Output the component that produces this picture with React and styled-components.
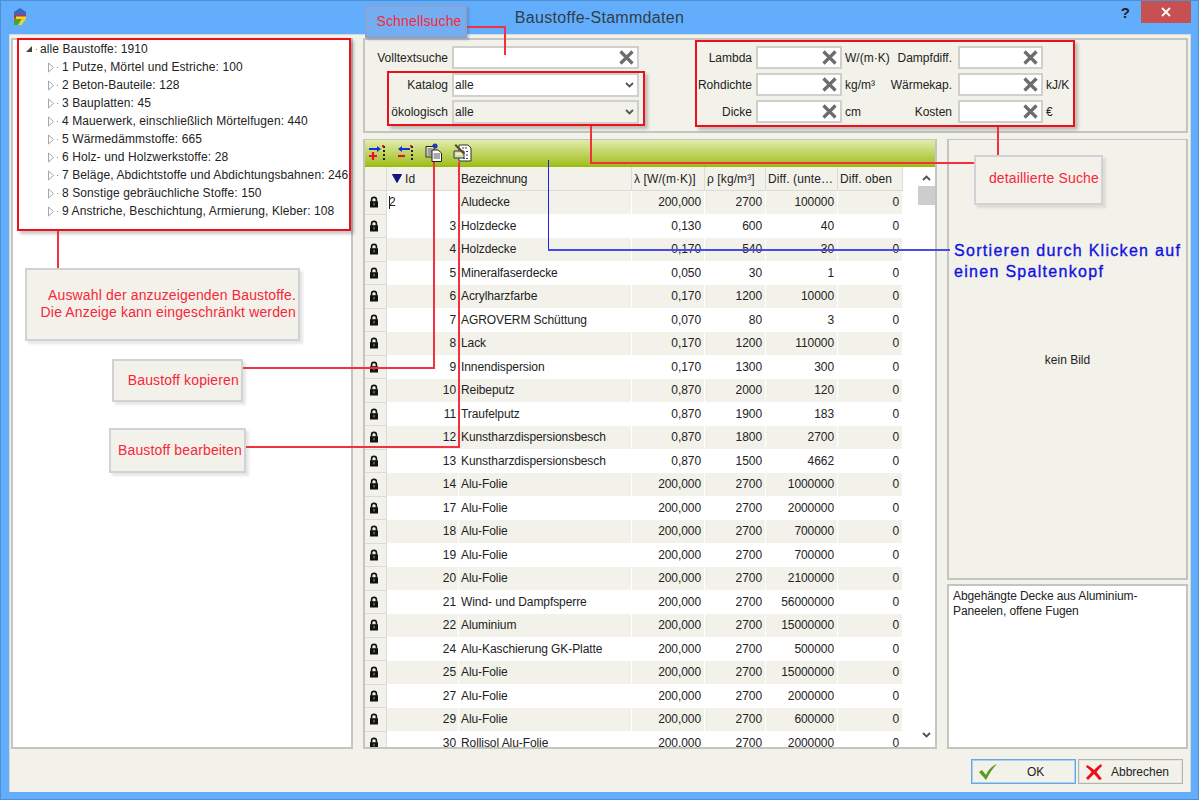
import React from 'react';
import styled, { createGlobalStyle } from 'styled-components';

const GlobalStyle = createGlobalStyle`
  html, body { margin: 0; padding: 0; background: #62aefc; }
  * { box-sizing: border-box; }
`;

const UI_FONT = `"Liberation Sans", Arial, sans-serif`;
const PANEL_BG = '#f2f2ea';
const LINE = '#c4c4c0';

const Win = styled.div`
  position: relative;
  width: 1199px;
  height: 800px;
  overflow: hidden;
  background: #62aefc;
  box-shadow: inset 0 0 0 1px #4d8fd0;
  font: 12px ${UI_FONT};
  color: #222;
`;

const TitleBar = styled.div`
  position: relative;
  height: 34px;
  display: flex;
  align-items: flex-start;
  justify-content: center;
`;

const Logo = styled.svg`
  position: absolute;
  left: 14px;
  top: 8px;
`;

const Title = styled.div`
  margin-top: 9px;
  font-size: 16px;
  color: #2f3f48;
  letter-spacing: 0.3px;
`;

const HelpMark = styled.div`
  position: absolute;
  right: 69px;
  top: 4px;
  font: bold 15px ${UI_FONT};
  color: #222;
`;

const CloseBtn = styled.div`
  position: absolute;
  right: 8px;
  top: 1px;
  width: 50px;
  height: 22px;
  background: #c75050;
  display: flex;
  align-items: center;
  justify-content: center;
`;

const Client = styled.div`
  margin: 0 8px 0 9px;
  height: 758px;
  padding: 3px 1px 0;
  background: ${PANEL_BG};
  border: 1px solid #d8d8d8;
  border-bottom: none;
  display: flex;
  flex-direction: column;
`;

const Body = styled.div`
  height: 711px;
  display: flex;
  gap: 10px;
`;

const Panel = styled.div`
  border: 2px solid ${LINE};
  background: ${p => p.$bg || PANEL_BG};
`;

const TreePanel = styled(Panel)`
  width: 342px;
  flex: none;
  background: #fff;
`;

const TreeList = styled.div`
  letter-spacing: 0.1px;
`;

const TreeRow = styled.div`
  height: 18px;
  padding-left: ${p => (p.$root ? 12 : 34)}px;
  display: flex;
  align-items: center;
  white-space: nowrap;
`;

const TreeDot = styled.span`
  width: 1px;
  height: 1px;
  margin: 0 ${p => (p.$root ? 3 : 4)}px 0 ${p => (p.$root ? 3 : 2)}px;
  background: #888;
`;

const Main = styled.div`
  width: 825px;
  flex: none;
  display: flex;
  flex-direction: column;
  gap: 6px;
`;

const FilterPanel = styled(Panel)`
  height: 95px;
  flex: none;
  padding-top: 6px;
  display: flex;
  gap: 57px;
`;

const SearchGrid = styled.div`
  display: grid;
  grid-template-columns: 83px 187px;
  grid-auto-rows: 23px;
  row-gap: 4px;
  column-gap: 4px;
  align-items: center;
`;

const DetailGrid = styled.div`
  display: grid;
  grid-template-columns: 60px 86px 55px 61px 85px 40px;
  grid-auto-rows: 23px;
  row-gap: 4px;
  align-items: center;
`;

const Label = styled.div`
  display: flex;
  justify-content: flex-end;
  white-space: nowrap;
  padding-right: ${p => p.$pad || 0}px;
`;

const Unit = styled.div`
  padding-left: 3px;
  white-space: nowrap;
`;

const Field = styled.div`
  height: ${p => p.$h || 23}px;
  border: 2px solid #cfcfcb;
  background: ${p => p.$bg || '#fff'};
  display: flex;
  align-items: center;
  justify-content: space-between;
  padding: 0 ${p => p.$right || 3}px 0 1px;
`;

const Lower = styled.div`
  height: 610px;
  display: flex;
  gap: 10px;
`;

const GridPanel = styled(Panel)`
  width: 574px;
  flex: none;
  overflow: hidden;
  background: #fff;
  border-top-width: 1px;
`;

const Toolbar = styled.div`
  height: 27px;
  padding: 5px 0 0 4px;
  display: flex;
  background: linear-gradient(#e2ecaa 0%, #c2d668 45%, #a4c226 90%, #93bb00 100%);
`;

const ToolIcon = styled.svg`
  flex: none;
  margin-right: ${p => p.$gap}px;
  margin-top: ${p => p.$lift || 0}px;
`;

const GridBody = styled.div`
  display: flex;
  height: 582px;
`;

const Table = styled.div`
  width: 538px;
  flex: none;
`;

const COLS = '22px 72px 173px 73px 61px 72px 65px';

const HeadRow = styled.div`
  display: grid;
  grid-template-columns: ${COLS};
  height: 24px;
`;

const HeadCell = styled.div`
  background: ${PANEL_BG};
  border-right: 1px solid #dcdcd6;
  border-bottom: 1px solid #dcdcd6;
  padding-left: ${p => p.$pad || 2}px;
  display: flex;
  align-items: center;
  gap: 3px;
  white-space: nowrap;
  overflow: hidden;
  letter-spacing: ${p => (p.$tight ? -0.3 : 0.1)}px;
`;

const DataRow = styled.div`
  display: grid;
  grid-template-columns: ${COLS};
  height: 23.5px;
  letter-spacing: -0.08px;
`;

const Cell = styled.div`
  background: ${p => (p.$odd ? PANEL_BG : '#fff')};
  border-right: 1px solid #fff;
  border-bottom: 1px solid #fff;
  display: flex;
  align-items: center;
  justify-content: ${p => (p.$left ? 'flex-start' : 'flex-end')};
  padding: 0 3px 0 2px;
  white-space: nowrap;
  overflow: hidden;
`;

const IdCell = styled(Cell)`
  padding-right: 2px;
`;

const LockCell = styled.div`
  background: ${PANEL_BG};
  border-right: 1px solid #dcdcd6;
  border-bottom: 1px solid #dcdcd6;
  display: flex;
  align-items: center;
  justify-content: center;
  padding-right: 3px;
`;

const Caret = styled.span`
  display: inline-block;
  width: 1px;
  height: 13px;
  margin-right: -1px;
  background: #222;
`;

const ScrollTrack = styled.div`
  margin-left: 15px;
  width: 17px;
  display: flex;
  flex-direction: column;
  align-items: center;
  padding-top: 8px;
`;

const ScrollThumb = styled.div`
  width: 17px;
  height: 19px;
  margin-top: 5px;
  background: #cdcdcd;
`;

const ScrollDown = styled.svg`
  margin-top: 527px;
`;

const SideCol = styled.div`
  width: 241px;
  flex: none;
  display: flex;
  flex-direction: column;
  gap: 4px;
`;

const ImagePanel = styled(Panel)`
  flex: 1;
  display: flex;
  align-items: center;
  justify-content: center;
  padding-top: 2px;
  border-top-width: 1px;
`;

const NotePanel = styled(Panel)`
  height: 165px;
  flex: none;
  background: #fff;
  padding: 3px 4px;
  line-height: 15px;
  letter-spacing: -0.1px;
`;

const Footer = styled.div`
  margin-top: 10px;
  height: 25px;
  padding-right: 6px;
  display: flex;
  justify-content: flex-end;
  gap: 2px;
`;

const DialogBtn = styled.div`
  position: relative;
  width: 105px;
  height: 25px;
  border: 1px solid ${p => (p.$primary ? '#66a8e0' : '#b4b4b0')};
  box-shadow: inset 0 0 0 1px ${p => (p.$primary ? '#a8d0f0' : '#e4e4e0')};
  display: flex;
  align-items: center;
  padding-left: 6px;
`;

const BtnText = styled.span`
  margin-left: ${p => p.$gap}px;
`;

// annotations that were drawn over the screenshot
const Callout = styled.div`
  position: absolute;
  left: ${p => p.$x}px;
  top: ${p => p.$y}px;
  width: ${p => p.$w}px;
  height: ${p => p.$h}px;
  background: ${PANEL_BG};
  border: 2px solid #d2d2d6;
  box-shadow: 3px 3px 2px rgba(120, 120, 120, 0.18);
  color: #f8263a;
  font: 14px/17px ${UI_FONT};
  letter-spacing: 0.15px;
  text-align: right;
  white-space: nowrap;
  padding: ${p => p.$pad || '0 2px 0 0'};
  display: flex;
  flex-direction: column;
  justify-content: center;
`;

const QuickCallout = styled(Callout)`
  background: #74aef0;
  border-color: #86a4cf;
  box-shadow: 2px 2px 2px rgba(60, 90, 130, 0.3);
  text-align: center;
`;

const Frame = styled.div`
  position: absolute;
  left: ${p => p.$x}px;
  top: ${p => p.$y}px;
  width: ${p => p.$w}px;
  height: ${p => p.$h}px;
  border: 2px solid #ee0f1c;
  box-shadow: 3px 3px 3px rgba(0, 0, 0, 0.22);
`;

const Wire = styled.div`
  position: absolute;
  left: ${p => p.$x}px;
  top: ${p => p.$y}px;
  width: ${p => p.$w}px;
  height: ${p => p.$h}px;
  background: ${p => p.$c || '#f5303e'};
`;

const SortHint = styled.div`
  position: absolute;
  left: 954px;
  top: 240px;
  color: #1212e0;
  font: 16px/21px ${UI_FONT};
  letter-spacing: 1.3px;
  -webkit-text-stroke: 0.35px #1212e0;
  white-space: nowrap;
`;

const TREE = [
  '1 Putze, Mörtel und Estriche: 100',
  '2 Beton-Bauteile: 128',
  '3 Bauplatten: 45',
  '4 Mauerwerk, einschließlich Mörtelfugen: 440',
  '5 Wärmedämmstoffe: 665',
  '6 Holz- und Holzwerkstoffe: 28',
  '7 Beläge, Abdichtstoffe und Abdichtungsbahnen: 246',
  '8 Sonstige gebräuchliche Stoffe: 150',
  '9 Anstriche, Beschichtung, Armierung, Kleber: 108',
];

const ROWS = [
  [2, 'Aludecke', '200,000', 2700, 100000],
  [3, 'Holzdecke', '0,130', 600, 40],
  [4, 'Holzdecke', '0,170', 540, 30],
  [5, 'Mineralfaserdecke', '0,050', 30, 1],
  [6, 'Acrylharzfarbe', '0,170', 1200, 10000],
  [7, 'AGROVERM Schüttung', '0,070', 80, 3],
  [8, 'Lack', '0,170', 1200, 110000],
  [9, 'Innendispersion', '0,170', 1300, 300],
  [10, 'Reibeputz', '0,870', 2000, 120],
  [11, 'Traufelputz', '0,870', 1900, 183],
  [12, 'Kunstharzdispersionsbesch', '0,870', 1800, 2700],
  [13, 'Kunstharzdispersionsbesch', '0,870', 1500, 4662],
  [14, 'Alu-Folie', '200,000', 2700, 1000000],
  [17, 'Alu-Folie', '200,000', 2700, 2000000],
  [18, 'Alu-Folie', '200,000', 2700, 700000],
  [19, 'Alu-Folie', '200,000', 2700, 700000],
  [20, 'Alu-Folie', '200,000', 2700, 2100000],
  [21, 'Wind- und Dampfsperre', '200,000', 2700, 56000000],
  [22, 'Aluminium', '200,000', 2700, 15000000],
  [24, 'Alu-Kaschierung GK-Platte', '200,000', 2700, 500000],
  [25, 'Alu-Folie', '200,000', 2700, 15000000],
  [27, 'Alu-Folie', '200,000', 2700, 2000000],
  [29, 'Alu-Folie', '200,000', 2700, 600000],
  [30, 'Rollisol Alu-Folie', '200,000', 2700, 2000000],
];

const DETAIL = [
  ['Lambda', 'W/(m·K)', 'Dampfdiff.', ''],
  ['Rohdichte', 'kg/m³', 'Wärmekap.', 'kJ/K'],
  ['Dicke', 'cm', 'Kosten', '€'],
];

const ClearIcon = () => (
  <svg width="17" height="17" viewBox="0 0 17 17">
    <path d="M2.5 2.5 L14.5 14.5 M14.5 2.5 L2.5 14.5" stroke="#6c6c6c" strokeWidth="3.2" />
  </svg>
);

const Chevron = ({ up, color = '#555' }) => (
  <svg width="9" height="6" viewBox="0 0 9 6">
    <path d={up ? 'M1 5 L4.5 1.5 L8 5' : 'M1 1 L4.5 4.5 L8 1'} fill="none" stroke={color} strokeWidth="1.8" />
  </svg>
);

const TreeArrow = ({ open }) =>
  open ? (
    <svg width="8" height="8" viewBox="0 0 8 8">
      <path d="M7 1 L7 7 L1 7 Z" fill="#444" />
    </svg>
  ) : (
    <svg width="8" height="11" viewBox="0 0 8 11">
      <path d="M1.5 1 L6.5 5.5 L1.5 10 Z" fill="#fff" stroke="#a6a6a6" />
    </svg>
  );

const LockIcon = () => (
  <svg width="10" height="12" viewBox="0 0 10 12">
    <path d="M2.6 5.5 V3.6 C2.6 0.6 7.4 0.6 7.4 3.6 V5.5" fill="none" stroke="#111" strokeWidth="1.6" />
    <rect x="1" y="5.2" width="8" height="6.3" fill="#111" />
    <rect x="4.4" y="6.8" width="1.2" height="2.6" fill="#888" />
  </svg>
);

const AddColumnIcon = () => (
  <ToolIcon $gap={10} width="18" height="16" viewBox="0 0 18 16">
    <path d="M0 4 H9" stroke="#1a2ee0" strokeWidth="2" />
    <path d="M8 1 L12 4 L8 7 Z" fill="#1a2ee0" />
    <path d="M4 7 V15 M0 11 H8" stroke="#e8102a" strokeWidth="2.2" />
    <path d="M15 1 V15" stroke="#222" strokeWidth="2" strokeDasharray="2 2" />
    <rect x="13" y="0" width="2" height="2" fill="#e8102a" />
  </ToolIcon>
);

const RemoveColumnIcon = () => (
  <ToolIcon $gap={10} width="18" height="16" viewBox="0 0 18 16">
    <path d="M4 4 H13" stroke="#1a2ee0" strokeWidth="2" />
    <path d="M5 1 L1 4 L5 7 Z" fill="#1a2ee0" />
    <path d="M1 11 H8" stroke="#e8102a" strokeWidth="2.2" />
    <path d="M15 1 V15" stroke="#222" strokeWidth="2" strokeDasharray="2 2" />
    <rect x="13" y="0" width="2" height="2" fill="#e8102a" />
  </ToolIcon>
);

const CopyIcon = () => (
  <ToolIcon $gap={10} $lift={-2} width="18" height="19" viewBox="0 0 18 19">
    <circle cx="10" cy="3" r="2.6" fill="#1a3ad0" />
    <path d="M1 3.5 H9 V14 H1 Z" fill="#ececd8" stroke="#222" />
    <path d="M2.5 6 H7.5 M2.5 8 H7.5 M2.5 10 H7.5 M2.5 12 H7.5" stroke="#555" />
    <path d="M7 7 H13 L16.5 10 V18.5 H7 Z" fill="#fff" stroke="#222" />
    <path d="M8.5 11 H15 M8.5 13 H15 M8.5 15 H15" stroke="#555" />
  </ToolIcon>
);

const EditIcon = () => (
  <ToolIcon $gap={0} $lift={-2} width="19" height="19" viewBox="0 0 19 19">
    <path d="M7 2 H15 L18 5 V18 H6 V2 Z" fill="#fff" stroke="#333" />
    <path d="M9 5 H15 M10 15.5 H16 M13 12 H16 M13 8.5 H16" stroke="#444" strokeDasharray="2 1" />
    <path d="M1 8 H11 V15 H1 Z" fill="#e8dc90" stroke="#1a3a80" />
    <path d="M3 1 L12 10 L10.5 11.5 L1.5 2.5 Z" fill="#5a4a20" />
    <path d="M3 11 H9" stroke="#fff" />
  </ToolIcon>
);

const App = () => (
  <>
    <GlobalStyle />
    <Win>
      <TitleBar>
        <Logo width="13" height="18" viewBox="0 0 13 18">
          <path d="M0 4 L6 0 L12 4 V7 H0 Z" fill="#3a66c4" />
          <path d="M0 7 H12 V10.5 H0 Z" fill="#e0282a" />
          <path d="M0 10.5 H8 L4 17 H0 Z" fill="#4fa030" />
          <path d="M2 8.5 H12 V10.5 L7.5 17 H4 L8 11 H2 Z" fill="#f0d820" />
        </Logo>
        <Title>Baustoffe-Stammdaten</Title>
        <HelpMark>?</HelpMark>
        <CloseBtn>
          <svg width="10" height="10" viewBox="0 0 10 10">
            <path d="M1 1 L9 9 M9 1 L1 9" stroke="#fff" strokeWidth="1.8" />
          </svg>
        </CloseBtn>
      </TitleBar>

      <Client>
        <Body>
          <TreePanel>
            <TreeList>
              <TreeRow $root>
                <TreeArrow open />
                <TreeDot $root />
                alle Baustoffe: 1910
              </TreeRow>
              {TREE.map(t => (
                <TreeRow key={t}>
                  <TreeArrow />
                  <TreeDot />
                  {t}
                </TreeRow>
              ))}
            </TreeList>
          </TreePanel>

          <Main>
            <FilterPanel>
              <SearchGrid>
                <Label>Volltextsuche</Label>
                <Field $right={2}>
                  <span />
                  <ClearIcon />
                </Field>
                <Label>Katalog</Label>
                <Field $h={24}>
                  alle
                  <Chevron />
                </Field>
                <Label>ökologisch</Label>
                <Field $h={24} $bg={PANEL_BG}>
                  alle
                  <Chevron />
                </Field>
              </SearchGrid>
              <DetailGrid>
                {DETAIL.map(([a, u, b, v]) => (
                  <React.Fragment key={a}>
                    <Label $pad={4}>{a}</Label>
                    <Field $right={2}>
                      <span />
                      <ClearIcon />
                    </Field>
                    <Unit>{u}</Unit>
                    <Label $pad={6}>{b}</Label>
                    <Field $right={2}>
                      <span />
                      <ClearIcon />
                    </Field>
                    <Unit>{v}</Unit>
                  </React.Fragment>
                ))}
              </DetailGrid>
            </FilterPanel>

            <Lower>
              <GridPanel>
                <Toolbar>
                  <AddColumnIcon />
                  <RemoveColumnIcon />
                  <CopyIcon />
                  <EditIcon />
                </Toolbar>
                <GridBody>
                  <Table>
                    <HeadRow>
                      <HeadCell />
                      <HeadCell $pad={5}>
                        <svg width="10" height="9" viewBox="0 0 10 9">
                          <path d="M0.5 0.5 H9.5 L5 8.5 Z" fill="#14148c" stroke="#10106a" />
                        </svg>
                        Id
                      </HeadCell>
                      <HeadCell $tight>Bezeichnung</HeadCell>
                      <HeadCell>λ [W/(m·K)]</HeadCell>
                      <HeadCell>ρ [kg/m³]</HeadCell>
                      <HeadCell>Diff. (unte…</HeadCell>
                      <HeadCell>Diff. oben</HeadCell>
                    </HeadRow>
                    {ROWS.map(([id, name, lambda, rho, diff], i) => {
                      const odd = i % 2 === 0;
                      return (
                        <DataRow key={id}>
                          <LockCell>
                            <LockIcon />
                          </LockCell>
                          {i === 0 ? (
                            <IdCell $left>
                              <Caret />
                              {id}
                            </IdCell>
                          ) : (
                            <IdCell $odd={odd}>{id}</IdCell>
                          )}
                          <Cell $odd={odd} $left>{name}</Cell>
                          <Cell $odd={odd}>{lambda}</Cell>
                          <Cell $odd={odd}>{rho}</Cell>
                          <Cell $odd={odd}>{diff}</Cell>
                          <Cell $odd={odd}>0</Cell>
                        </DataRow>
                      );
                    })}
                  </Table>
                  <ScrollTrack>
                    <Chevron up color="#505050" />
                    <ScrollThumb />
                    <ScrollDown width="9" height="6" viewBox="0 0 9 6">
                      <path d="M1 1 L4.5 4.5 L8 1" fill="none" stroke="#505050" strokeWidth="1.8" />
                    </ScrollDown>
                  </ScrollTrack>
                </GridBody>
              </GridPanel>

              <SideCol>
                <ImagePanel>kein Bild</ImagePanel>
                <NotePanel>
                  Abgehängte Decke aus Aluminium-
                  <br />
                  Paneelen, offene Fugen
                </NotePanel>
              </SideCol>
            </Lower>
          </Main>
        </Body>

        <Footer>
          <DialogBtn $primary>
            <svg width="20" height="18" viewBox="0 0 20 18">
              <path d="M1 9 L4 7 L8 12 C10 7 14 3 19 1 C14 6 11 11 8 17 Z" fill="#5a9a1e" />
            </svg>
            <BtnText $gap={29}>OK</BtnText>
          </DialogBtn>
          <DialogBtn>
            <svg width="18" height="16" viewBox="0 0 18 16">
              <path d="M2 1 C6 3 8 5 9 6 C11 4 13 2 16 0 L17 2 C15 4 13 6 11.5 8 C13 10 15 12 17 15 L14 16 C12 13 10 11 9 10 C7 12 5 14 3 16 L1 14 C3 12 5 10 6.5 8 C5 6 3 4 1 3 Z" fill="#f00d18" />
            </svg>
            <BtnText $gap={8}>Abbrechen</BtnText>
          </DialogBtn>
        </Footer>
      </Client>

      {/* red frames */}
      <Frame $x={17} $y={38} $w={334} $h={193} />
      <Frame $x={387} $y={71} $w={258} $h={55} />
      <Frame $x={695} $y={40} $w={380} $h={87} />

      {/* connector lines */}
      <Wire $x={57} $y={231} $w={2} $h={37} />
      <Wire $x={243} $y={367} $w={192} $h={2} />
      <Wire $x={433} $y={162} $w={2} $h={207} />
      <Wire $x={245} $y={446} $w={215} $h={2} />
      <Wire $x={458} $y={162} $w={2} $h={286} />
      <Wire $x={466} $y={26} $w={40} $h={2} />
      <Wire $x={504} $y={26} $w={2} $h={29} />
      <Wire $x={590} $y={126} $w={2} $h={38} />
      <Wire $x={590} $y={162} $w={384} $h={2} />
      <Wire $x={997} $y={127} $w={2} $h={28} />
      <Wire $x={548} $y={160} $w={1} $h={91} $c="#2020e8" />
      <Wire $x={548} $y={249} $w={402} $h={2} $c="#4a4ae8" />

      {/* callouts */}
      <QuickCallout $x={365} $y={5} $w={102} $h={33} $pad="0 0 0 6px">Schnellsuche</QuickCallout>
      <Callout $x={25} $y={268} $w={275} $h={73} $pad="0 2px 2px 0">
        <div>Auswahl der anzuzeigenden Baustoffe.</div>
        <div>Die Anzeige kann eingeschränkt werden</div>
      </Callout>
      <Callout $x={112} $y={359} $w={131} $h={43}>Baustoff kopieren</Callout>
      <Callout $x={109} $y={428} $w={137} $h={45}>Baustoff bearbeiten</Callout>
      <Callout $x={974} $y={155} $w={129} $h={50} $pad="0 2px 4px 0">detaillierte Suche</Callout>

      <SortHint>
        Sortieren durch Klicken auf
        <br />
        einen Spaltenkopf
      </SortHint>
    </Win>
  </>
);

export default App;
